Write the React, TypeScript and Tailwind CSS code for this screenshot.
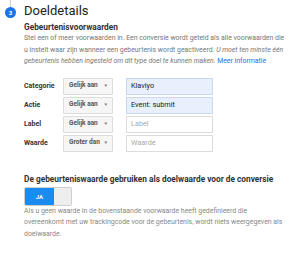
export default function App() {
  const rows = [
    { label: 'Categorie', op: 'Gelijk aan', value: 'Klaviyo', filled: true },
    { label: 'Actie', op: 'Gelijk aan', value: 'Event: submit', filled: true },
    { label: 'Label', op: 'Gelijk aan', value: 'Label', filled: false },
    { label: 'Waarde', op: 'Groter dan', value: 'Waarde', filled: false },
  ];

  return (
    <div className="w-[300px] h-[255px] bg-white relative overflow-hidden font-['Roboto',sans-serif]">
      {/* step line + badge */}
      <div className="absolute left-[10px] top-0 w-px h-[7px] bg-[#cfcfcf]" />
      <div className="absolute left-[5px] top-[7px] w-[11px] h-[11px] rounded-full bg-[#1a73e8] text-white text-[6px] font-bold flex items-center justify-center">
        3
      </div>

      <div className="pl-[24px] pt-[3px]">
        <h1 className="text-[13px] leading-[16px] text-[#222]">Doeldetails</h1>

        <h2 className="mt-[3px] text-[8.3px] leading-[11px] font-bold text-[#333] whitespace-nowrap">Gebeurtenisvoorwaarden</h2>
        <p className="text-[6.9px] leading-[11.5px] text-[#777] whitespace-nowrap">
          Stel een of meer voorwaarden in. Een conversie wordt geteld als alle voorwaarden die
          <br />
          u instelt waar zijn wanneer een gebeurtenis wordt geactiveerd.{' '}
          <i>U moet ten minste één</i>
          <br />
          <i>gebeurtenis hebben ingesteld om dit type doel te kunnen maken.</i>{' '}
          <span className="text-[#1a73e8]">Meer informatie</span>
        </p>

        <div className="mt-[10px] flex flex-col gap-[2px]">
          {rows.map((r) => (
            <div key={r.label} className="flex items-center h-[17px]">
              <div className="w-[39px] text-[7px] font-bold text-[#333]">{r.label}</div>
              <div className="w-[50px] h-[17px] flex items-center justify-between pl-[5px] pr-[4px] bg-[#f6f6f6] border border-[#dcdcdc] rounded-[1px] text-[6.5px] font-bold text-[#555] whitespace-nowrap">
                <span>{r.op}</span>
                <span className="text-[4.5px] text-[#777]">▼</span>
              </div>
              <div
                className={
                  r.filled
                    ? 'ml-[13px] w-[87px] h-[17px] flex items-center px-[4px] bg-[#e8f0fe] border border-[#c9d7f2] text-[7.3px] text-[#222]'
                    : 'ml-[13px] w-[87px] h-[17px] flex items-center px-[4px] bg-white border border-[#dcdcdc] text-[7.3px] text-[#aaa]'
                }
              >
                {r.value}
              </div>
            </div>
          ))}
        </div>

        <h2 className="mt-[22px] text-[8.3px] leading-[11px] font-bold text-[#333] whitespace-nowrap">
          De gebeurteniswaarde gebruiken als doelwaarde voor de conversie
        </h2>
        <div className="mt-[2px] flex w-[48px] h-[19px] rounded-[2px] overflow-hidden border border-[#cfcfcf]">
          <div className="w-[29px] bg-[#1a8cf0] text-white text-[6px] font-bold flex items-center justify-center">JA</div>
          <div className="flex-1 bg-[#eeeeee]" />
        </div>
        <p className="text-[6.9px] leading-[11.5px] text-[#888] whitespace-nowrap">
          Als u geen waarde in de bovenstaande voorwaarde heeft gedefinieerd die
          <br />
          overeenkomt met uw trackingcode voor de gebeurtenis, wordt niets weergegeven als
          <br />
          doelwaarde.
        </p>
      </div>
    </div>
  );
}
